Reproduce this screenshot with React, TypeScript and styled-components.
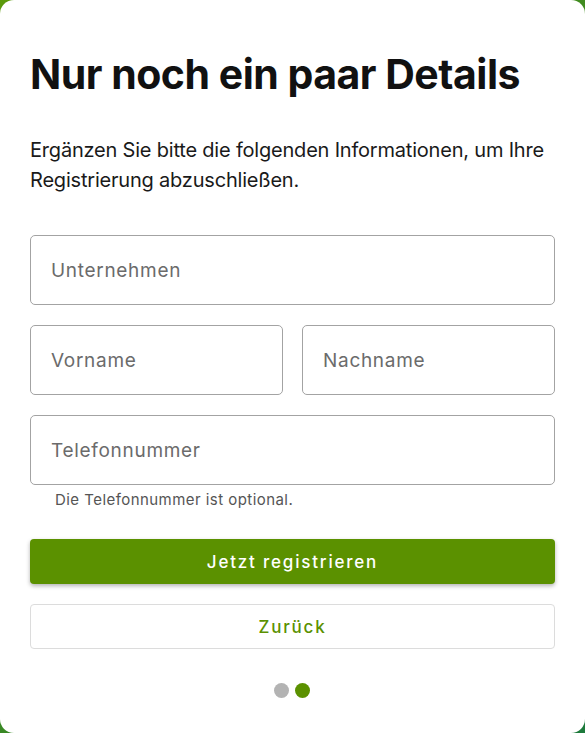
import React from 'react';
import styled, { createGlobalStyle } from 'styled-components';

const GlobalStyle = createGlobalStyle`
  html, body {
    margin: 0;
    padding: 0;
    height: 100%;
  }
  body {
    background: linear-gradient(135deg, #5c9a0c 0%, #3d8a22 50%, #1d7a3c 100%);
    font-family: Inter, "Noto Sans", sans-serif;
    color: #111;
  }
  #root {
    height: 100%;
  }
`;

const Card = styled.div`
  box-sizing: border-box;
  height: 733px;
  background: #fff;
  border-radius: 14px;
  padding: 50px 30px 0;
  display: flex;
  flex-direction: column;
`;

const Title = styled.h1`
  margin: 0;
  font-size: 41px;
  line-height: 48px;
  font-weight: 700;
  letter-spacing: -0.5px;
  color: #111;
`;

const Intro = styled.p`
  margin: 37px 0 40px;
  font-size: 20px;
  line-height: 30px;
  letter-spacing: -0.2px;
  color: #1a1a1a;
`;

const Form = styled.form`
  display: flex;
  flex-direction: column;
  gap: 20px;
`;

const Row = styled.div`
  display: grid;
  grid-template-columns: 1fr 1fr;
  gap: 19px;
`;

const Field = styled.div`
  display: flex;
  flex-direction: column;
`;

const Input = styled.input`
  box-sizing: border-box;
  width: 100%;
  height: 70px;
  border: 1px solid #a3a3a3;
  border-radius: 5px;
  padding: 0 20px;
  font-family: inherit;
  font-size: 19px;
  letter-spacing: 0.7px;
  color: #222;
  background: #fff;
  outline: none;
  &::placeholder {
    color: #6b6b6b;
  }
`;

const Hint = styled.span`
  margin: 5px 0 0 25px;
  font-size: 15px;
  line-height: 20px;
  letter-spacing: 0.45px;
  color: #555;
`;

const Actions = styled.div`
  display: flex;
  flex-direction: column;
  gap: 20px;
  margin-top: 9px;
`;

const Button = styled.button<{ $primary?: boolean }>`
  height: 45px;
  border-radius: 4px;
  border: ${p => (p.$primary ? 'none' : '1px solid #dcdcdc')};
  background: ${p => (p.$primary ? '#5b9100' : '#fff')};
  color: ${p => (p.$primary ? '#fff' : '#5b9100')};
  box-shadow: ${p => (p.$primary ? '0 2px 4px rgba(0, 0, 0, 0.3)' : 'none')};
  font-family: inherit;
  font-size: 17px;
  font-weight: 500;
  letter-spacing: 1.8px;
  cursor: pointer;
`;

const Dots = styled.div`
  display: flex;
  justify-content: center;
  gap: 6px;
  margin-top: 34px;
  padding-right: 2px;
`;

const Dot = styled.span<{ $active?: boolean }>`
  width: 15px;
  height: 15px;
  border-radius: 50%;
  background: ${p => (p.$active ? '#5b9100' : '#b3b3b3')};
`;

export default function App() {
  return (
    <>
      <GlobalStyle />
      <Card>
        <Title>Nur noch ein paar Details</Title>
        <Intro>
          Ergänzen Sie bitte die folgenden Informationen, um Ihre Registrierung abzuschließen.
        </Intro>
        <Form onSubmit={e => e.preventDefault()}>
          <Input placeholder="Unternehmen" />
          <Row>
            <Input placeholder="Vorname" />
            <Input placeholder="Nachname" />
          </Row>
          <Field>
            <Input placeholder="Telefonnummer" />
            <Hint>Die Telefonnummer ist optional.</Hint>
          </Field>
          <Actions>
            <Button $primary type="submit">Jetzt registrieren</Button>
            <Button type="button">Zurück</Button>
          </Actions>
        </Form>
        <Dots>
          <Dot />
          <Dot $active />
        </Dots>
      </Card>
    </>
  );
}
